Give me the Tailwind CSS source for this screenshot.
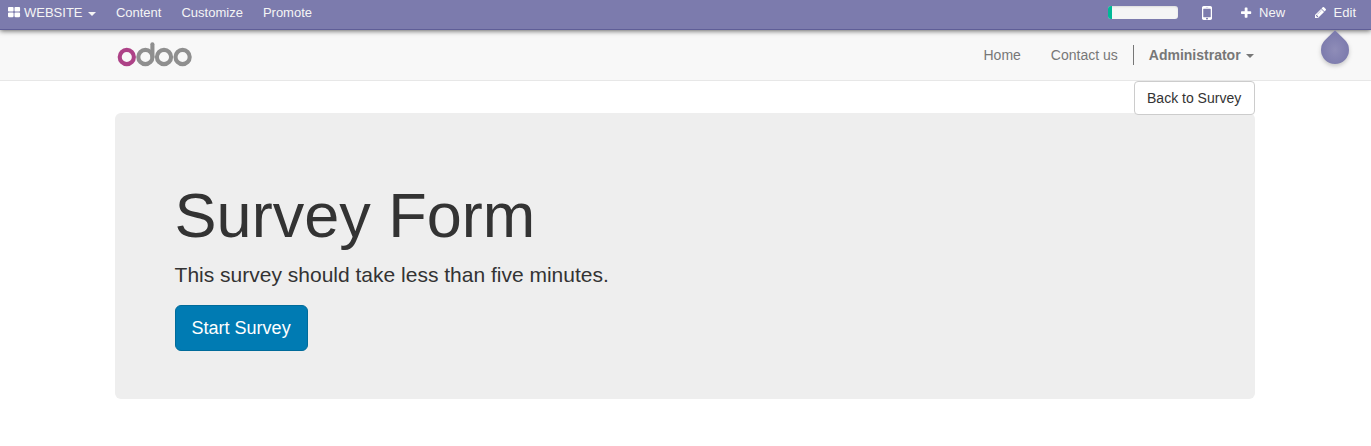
<!DOCTYPE html>
<html lang="en">
<head>
<meta charset="utf-8">
<title>Survey Form</title>
<script src="https://cdn.jsdelivr.net/npm/@tailwindcss/browser@4"></script>
</head>
<body class="bg-white text-[#333] text-sm leading-5 font-['Liberation_Sans',Arial,sans-serif]">
<nav class="relative z-10 flex h-[30px] items-start justify-between border-b border-[#5f5e97] bg-[#7c7bad] pt-[3px] text-[13px] leading-5 text-[#f5f5f5] shadow-[0_1px_5px_rgba(0,0,0,0.6)]">
  <div class="flex pl-2">
    <a class="mr-5 flex items-center"><svg class="mr-[3px] mb-[2px] h-[13px] w-[13px]" viewBox="64 0 1792 1792" fill="white"><path d="M832 1024v384q0 52-38 90t-90 38h-512q-52 0-90-38t-38-90v-384q0-52 38-90t90-38h512q52 0 90 38t38 90zm0-768v384q0 52-38 90t-90 38h-512q-52 0-90-38t-38-90v-384q0-52 38-90t90-38h512q52 0 90 38t38 90zm896 768v384q0 52-38 90t-90 38h-512q-52 0-90-38t-38-90v-384q0-52 38-90t90-38h512q52 0 90 38t38 90zm0-768v384q0 52-38 90t-90 38h-512q-52 0-90-38t-38-90v-384q0-52 38-90t90-38h512q52 0 90 38t38 90z"/></svg>WEBSITE<span class="mt-[2px] ml-[5.4px] border-x-4 border-t-4 border-x-transparent border-t-[#f5f5f5]"></span></a>
    <a class="mr-5">Content</a>
    <a class="mr-5">Customize</a>
    <a>Promote</a>
  </div>
  <div class="flex items-center pr-[15px]">
    <div class="mr-[24px] mb-[2px] h-[13px] w-[70.5px] overflow-hidden rounded-[3px] bg-[#f5f5f5] shadow-[inset_0_1px_2px_rgba(0,0,0,0.1)]"><div class="h-full w-[4.5px] bg-[#00b897]"></div></div>
    <svg class="mr-[29px] h-[14px] w-[10px]" viewBox="512 256 768 1280" preserveAspectRatio="none" fill="white"><path d="M976 1408q0-33-23.5-56.5t-56.5-23.5-56.5 23.5-23.5 56.5 23.5 56.5 56.5 23.5 56.5-23.5 23.5-56.5zm208-160v-704q0-13-9.5-22.5t-22.5-9.5h-512q-13 0-22.5 9.5t-9.5 22.5v704q0 13 9.5 22.5t22.5 9.5h512q13 0 22.5-9.5t9.5-22.5zm-192-848q0-16-16-16h-160q-16 0-16 16t16 16h160q16 0 16-16zm288-16v1024q0 52-38 90t-90 38h-512q-52 0-90-38t-38-90v-1024q0-52 38-90t90-38h512q52 0 90 38t38 90z"/></svg>
    <a class="mr-[29.5px] flex items-center"><svg class="mr-[5px] mb-[2px] h-[13px] w-[13px]" viewBox="192 -74 1792 1792" fill="white"><path d="M1600 736v192q0 40-28 68t-68 28h-416v416q0 40-28 68t-68 28h-192q-40 0-68-28t-28-68v-416h-416q-40 0-68-28t-28-68v-192q0-40 28-68t68-28h416v-416q0-40 28-68t68-28h192q40 0 68 28t28 68v416h416q40 0 68 28t28 68z"/></svg>New</a>
    <a class="flex items-center"><svg class="mr-[6px] mb-[2px] h-[13px] w-[13px]" viewBox="128 0 1792 1792" fill="white"><path d="M491 1536l91-91-235-235-91 91v107h128v128h107zm523-928q0-22-22-22-10 0-17 7l-542 542q-7 7-7 17 0 22 22 22 10 0 17-7l542-542q7-7 7-17zm-54-192l416 416-832 832h-416v-416zm683 96q0 53-37 90l-166 166-416-416 166-165q36-38 90-38 53 0 91 38l235 234q37 39 37 91z"/></svg>Edit</a>
  </div>
  <svg class="absolute top-[29px] right-[16px] h-[42px] w-10 drop-shadow-[0_2px_2px_rgba(0,0,0,0.2)]" viewBox="0 0 40 42"><defs><radialGradient id="drop" cx="50%" cy="58%" r="50%"><stop offset="0" stop-color="#8f8db8"/><stop offset="1" stop-color="#7c7bad"/></radialGradient></defs><path fill="url(#drop)" d="M20 1.2L29.9 11.1A14 14 0 1 1 10.1 11.1Z"/></svg>
</nav>
<header class="h-[51px] border-b border-[#e7e7e7] bg-[#f8f8f8]">
  <div class="ml-[114.6px] flex w-[1140px] justify-between">
    <svg class="mt-[10px] ml-[2.4px] h-8 w-[76px]" viewBox="0 0 76 32" fill="none" stroke-width="4.1" aria-label="odoo"><g stroke="#8f8f8f"><circle cx="28.4" cy="17" r="7.1"/><path d="M35.4 17V4.3" stroke-linecap="round"/><circle cx="47" cy="17" r="7.1"/><circle cx="65.6" cy="17" r="7.1"/></g><circle cx="9.8" cy="17" r="7.1" stroke="#ad4287"/></svg>
    <div class="flex items-start pt-[15px] text-[#777]">
      <a class="mr-[30px]">Home</a>
      <a class="mr-[15px]">Contact us</a>
      <span class="mr-[15px] h-5 w-px bg-[#777]"></span>
      <a class="mr-[1px] flex items-center font-bold">Administrator<span class="mt-[2px] ml-[5px] border-x-4 border-t-4 border-x-transparent border-t-[#777]"></span></a>
    </div>
  </div>
</header>
<main class="relative mt-8 ml-[114.6px] w-[1140px]">
  <a class="absolute -top-8 right-0 flex h-[34px] w-[121px] items-center justify-center rounded-[4px] border border-[#ccc] bg-white">Back to Survey</a>
  <section class="h-[286px] rounded-[6px] bg-[#eee] px-[60px] pt-[68px]">
    <h1 class="mb-[10px] text-[63px] leading-[1.1]">Survey Form</h1>
    <p class="mb-[15px] text-[21px] leading-[1.4]">This survey should take less than five minutes.</p>
    <a class="inline-block h-[46px] rounded-[6px] border border-[#006b9a] bg-[#007bb3] px-4 py-[10px] text-[18px] leading-6 text-white">Start Survey</a>
  </section>
</main>
</body>
</html>
